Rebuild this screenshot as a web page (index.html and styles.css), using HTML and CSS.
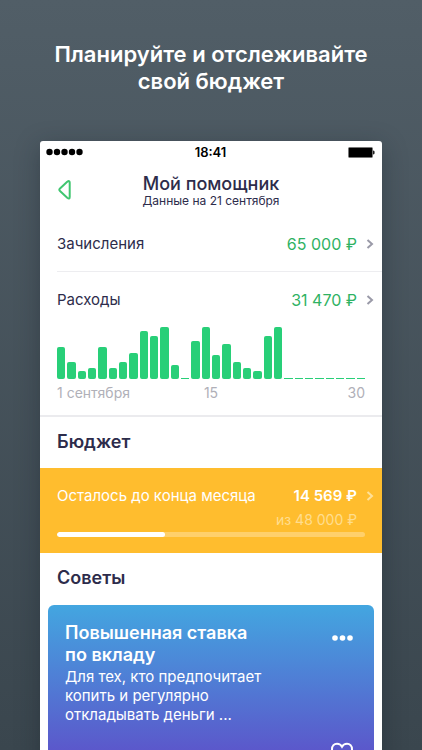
FILE: index.html
```html
<!DOCTYPE html>
<html lang="ru">
<head>
    <meta charset="UTF-8">
    <meta name="viewport" content="width=device-width, initial-scale=1.0">
    <title>Мой помощник</title>
    <link rel="stylesheet" href="styles.css">
</head>

<body>
    <h1 class="promo">Планируйте и отслеживайте<br>свой бюджет</h1>

    <main class="phone">
        <!-- Status bar -->
        <div class="status">
            <svg class="signal" width="38" height="8" viewBox="0 0 38 8">
                <circle cx="3.5" cy="4" r="3.2"/>
                <circle cx="11" cy="4" r="3.2"/>
                <circle cx="18.5" cy="4" r="3.2"/>
                <circle cx="26" cy="4" r="3.2"/>
                <circle cx="33.5" cy="4" r="3.2"/>
            </svg>
            <span class="time">18:41</span>
            <svg class="battery" width="27" height="11" viewBox="0 0 27 11">
                <rect x="0.5" y="0.5" width="24" height="10" rx="1" fill="#000" stroke="#777"/>
                <path d="M25 3.5c1.4 0 1.6 0.8 1.6 2s-0.2 2-1.6 2z" fill="#222"/>
            </svg>
        </div>

        <!-- Navigation -->
        <header class="nav">
            <button class="back" aria-label="Назад">
                <svg width="14" height="22" viewBox="0 0 14 22">
                    <path d="M10.2 1.8 3 8.4Q1.6 9.7 3 11L10.2 17.8Q12.7 19.600 12.700 17V2.600Q12.700 0 10.200 1.800z"/>
                </svg>
            </button>
            <div class="nav-text">
                <h2 class="nav-title">Мой помощник</h2>
                <p class="nav-date">Данные на 21 сентября</p>
            </div>
        </header>

        <!-- Income -->
        <a class="row income" href="#income">
            <span>Зачисления</span>
            <span class="sum">65 000 ₽</span>
            <svg class="chevron" width="8" height="10" viewBox="0 0 8 10"><path d="M1.5 1 6 5 1.5 9"/></svg>
        </a>

        <!-- Expenses -->
        <section class="expenses">
            <a class="row" href="#expenses">
                <span>Расходы</span>
                <span class="sum">31 470 ₽</span>
                <svg class="chevron" width="8" height="10" viewBox="0 0 8 10"><path d="M1.5 1 6 5 1.5 9"/></svg>
            </a>
            <div class="chart" id="chart"></div>
            <div class="axis">
                <span>1 сентября</span>
                <span>15</span>
                <span class="axis-end">30</span>
            </div>
        </section>

        <!-- Budget -->
        <h3 class="section-title">Бюджет</h3>
        <section class="budget">
            <a class="row" href="#budget">
                <label for="budgetLeft">Осталось до конца месяца</label>
                <span class="sum">14 569 ₽</span>
                <svg class="chevron" width="8" height="10" viewBox="0 0 8 10"><path d="M1.5 1 6 5 1.5 9"/></svg>
            </a>
            <p class="budget-total">из 48 000 ₽</p>
            <progress class="budget-bar" id="budgetLeft" value="35" max="100"></progress>
        </section>

        <!-- Tips -->
        <h3 class="section-title">Советы</h3>
        <article class="tip">
            <div class="tip-head">
                <h4 class="tip-title">Повышенная ставка<br>по вкладу</h4>
                <button class="more" aria-label="Ещё">
                    <svg width="22" height="6" viewBox="0 0 22 6">
                        <circle cx="3" cy="3" r="2.8"/>
                        <circle cx="10.5" cy="3" r="2.8"/>
                        <circle cx="18" cy="3" r="2.8"/>
                    </svg>
                </button>
            </div>
            <p class="tip-text">Для тех, кто предпочитает<br>копить и регулярно<br>откладывать деньги ...</p>
            <button class="like" aria-label="Нравится">
                <svg width="24" height="22" viewBox="0 0 24 22">
                    <path d="M12 20.5C6 15.5 2 12 2 7.2C2 3.9 4.2 1.7 7 1.7C9.2 1.7 11 2.8 12 4.7C13 2.8 14.8 1.7 17 1.7C19.8 1.7 22 3.9 22 7.2C22 12 18 15.5 12 20.5z"/>
                </svg>
            </button>
        </article>
    </main>

    <script>
        // Spending per day of the month, in percent of the largest day
        var days = [62, 33, 15, 21, 62, 21, 33, 50, 92, 83, 100, 27, 0, 73, 100,
            46, 67, 33, 21, 15, 83, 100, 0, 0, 0, 0, 0, 0, 0, 0];
        var chart = document.getElementById('chart');

        days.forEach(function (value) {
            var bar = document.createElement('div');
            bar.className = value ? 'bar' : 'bar bar-empty';
            bar.style.height = value + '%';
            chart.appendChild(bar);
        });
    </script>
</body>

</html>
```
FILE: styles.css
```css
* {
    box-sizing: border-box;
}

body {
    margin: 0;
    height: 100vh;
    overflow: hidden;
    font-family: Inter, "Noto Sans", sans-serif;
    font-size: 15px;
    line-height: 20px;
    color: #2d2c4b;
    background: linear-gradient(#515e67, #3a464e);
}

h1,
h2,
h3,
h4,
p {
    margin: 0;
}

button {
    padding: 0;
    border: none;
    background: none;
    cursor: pointer;
}

svg {
    display: block;
}

.promo {
    padding: 41px 20px 46px;
    font-size: 22px;
    line-height: 27px;
    font-weight: 600;
    color: #fff;
    text-align: center;
}

.phone {
    margin: 0 40px;
    background: #fff;
    border-radius: 3px;
    box-shadow: 0 6px 24px rgba(20, 30, 36, 0.35);
}

/* Status bar */
.status {
    display: grid;
    grid-template-columns: 1fr auto 1fr;
    align-items: center;
    height: 22px;
    padding: 0 7px 0 6px;
    color: #000;
}

.time {
    font-size: 13px;
    font-weight: 600;
}

.battery {
    justify-self: end;
}

/* Navigation */
.nav {
    display: grid;
    grid-template-columns: 20px 1fr 20px;
    align-items: center;
    padding: 10px 17px 8px;
}

.back svg {
    fill: none;
    stroke: #40c670;
    stroke-width: 2;
}

.nav-text {
    text-align: center;
}

.nav-title {
    font-size: 18px;
    line-height: 21px;
    font-weight: 500;
}

.nav-date {
    font-size: 12px;
    line-height: 14px;
}

/* Rows */
.row {
    display: flex;
    align-items: center;
    color: inherit;
    text-decoration: none;
}

.sum {
    margin-left: auto;
    font-size: 16px;
    color: #2fb263;
}

.chevron {
    margin-left: 9px;
    fill: none;
    stroke: #9a9aa8;
    stroke-width: 2;
}

.income {
    height: 56px;
    margin-left: 17px;
    padding-right: 8px;
    border-bottom: 1px solid #ededf0;
}

.expenses {
    padding: 18px 8px 12px 17px;
    border-bottom: 2px solid #ebebee;
}

/* Chart */
.chart {
    display: flex;
    align-items: flex-end;
    gap: 2px;
    height: 52px;
    margin: 17px 9px 4px 0;
}

.bar {
    flex: 1;
    background: #28cf78;
    border-radius: 2px;
}

.bar-empty {
    min-height: 1px;
    border-radius: 0;
}

.axis {
    display: grid;
    grid-template-columns: 1fr auto 1fr;
    margin-right: 9px;
    font-size: 14px;
    color: #b0b0b8;
}

.axis-end {
    text-align: right;
}

.section-title {
    padding: 15px 17px 16px;
    font-size: 18px;
    line-height: 20px;
    font-weight: 600;
}

/* Budget */
.budget {
    padding: 18px 8px 16px 17px;
    background: #ffbd2e;
    color: #fff;
}

.budget .sum {
    font-size: 15px;
    color: #fff;
    font-weight: 600;
}

.budget .chevron {
    stroke: #ffe19a;
}

.budget-total {
    margin: 5px 17px 3px 0;
    font-size: 14px;
    line-height: 18px;
    color: #ffdd8f;
    text-align: right;
}

.budget-bar {
    display: block;
    width: calc(100% - 9px);
    height: 5px;
    border: none;
    border-radius: 3px;
    overflow: hidden;
    appearance: none;
    background: #ffd06b;
}

.budget-bar::-webkit-progress-bar {
    background: #ffd06b;
}

.budget-bar::-webkit-progress-value {
    background: #fff;
    border-radius: 3px;
}

/* Tip card */
.tip {
    margin: 1px 8px 0;
    padding: 17px 20px 16px 17px;
    border-radius: 6px;
    background: linear-gradient(#43a6e0, #5b58cb 145px);
    color: #fff;
}

.tip-head {
    display: flex;
    justify-content: space-between;
    align-items: flex-start;
}

.tip-title {
    font-size: 18px;
    line-height: 22px;
    font-weight: 600;
}

.more {
    margin-top: 13px;
}

.more svg {
    fill: #fff;
}

.tip-text {
    margin-top: 1px;
    line-height: 19px;
}

.like {
    display: block;
    margin: 18px 0 0 auto;
}

.like svg {
    fill: none;
    stroke: #fff;
    stroke-width: 2;
}
```
